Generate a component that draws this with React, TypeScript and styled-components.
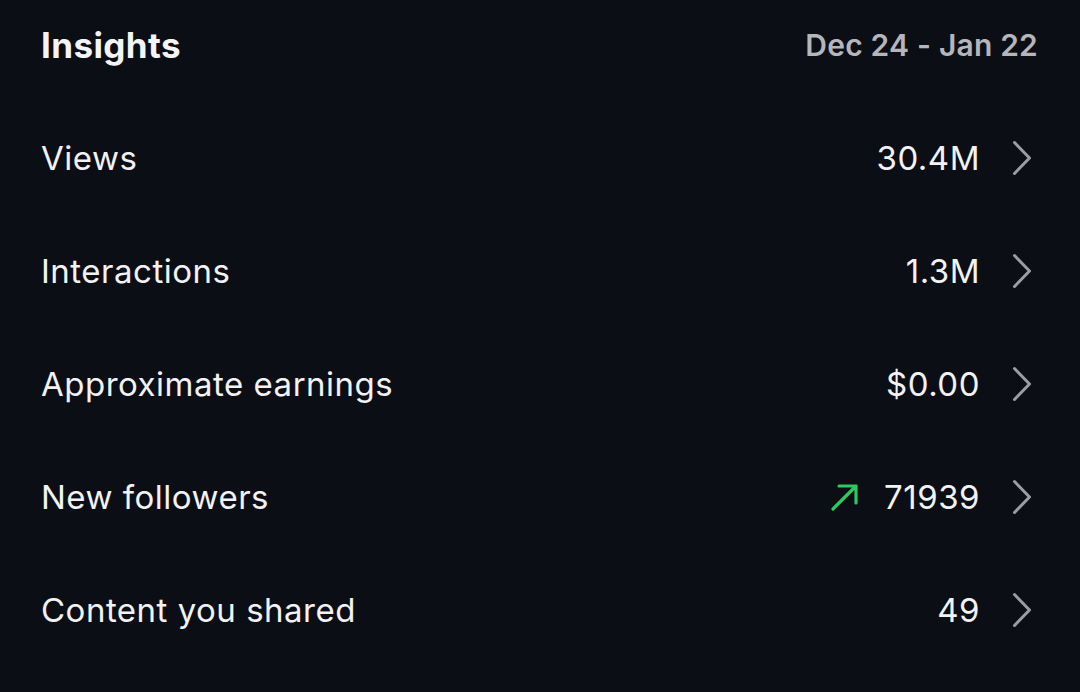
import React from "react";
import styled, { createGlobalStyle } from "styled-components";

const GlobalStyle = createGlobalStyle`
  html, body {
    margin: 0;
    padding: 0;
    background: #0b0e15;
  }
  body {
    font-family: Inter, "Noto Sans", sans-serif;
    -webkit-font-smoothing: antialiased;
  }
`;

type Row = {
  label: string;
  value: string;
  trendUp?: boolean;
};

const rows: Row[] = [
  { label: "Views", value: "30.4M" },
  { label: "Interactions", value: "1.3M" },
  { label: "Approximate earnings", value: "$0.00" },
  { label: "New followers", value: "71939", trendUp: true },
  { label: "Content you shared", value: "49" },
];

function ChevronIcon() {
  return (
    <svg width="20" height="36" viewBox="0 0 20 36" fill="none">
      <path
        d="M2.5 2.5 L17.5 18 L2.5 33.5"
        stroke="#9b9da4"
        strokeWidth="3"
        strokeLinecap="round"
        strokeLinejoin="round"
      />
    </svg>
  );
}

function TrendUpIcon() {
  return (
    <svg width="30" height="30" viewBox="0 0 30 30" fill="none">
      <path
        d="M3 27 L26 4 M9 4 H26 V21"
        stroke="#2ec95c"
        strokeWidth="3.2"
        strokeLinecap="round"
        strokeLinejoin="round"
      />
    </svg>
  );
}

export default function App() {
  return (
    <>
      <GlobalStyle />
      <Page>
        <Header>
          <Title>Insights</Title>
          <DateRange>Dec 24 - Jan 22</DateRange>
        </Header>
        <List>
          {rows.map((row) => (
            <Item key={row.label}>
              <Label>{row.label}</Label>
              <ValueGroup>
                {row.trendUp && (
                  <TrendWrap>
                    <TrendUpIcon />
                  </TrendWrap>
                )}
                <Value>{row.value}</Value>
                <ChevronWrap>
                  <ChevronIcon />
                </ChevronWrap>
              </ValueGroup>
            </Item>
          ))}
        </List>
      </Page>
    </>
  );
}

const Page = styled.div`
  width: 1080px;
  height: 692px;
  background: #0b0e15;
  padding: 0 48px 0 41px;
  box-sizing: border-box;
  overflow: hidden;
`;

const Header = styled.div`
  display: flex;
  justify-content: space-between;
  align-items: center;
  height: 90px;
  margin-right: -6px;
`;

const Title = styled.div`
  font-size: 35px;
  font-weight: 700;
  color: #f4f4f6;
  letter-spacing: 0.4px;
`;

const DateRange = styled.div`
  font-size: 30px;
  font-weight: 600;
  color: #b4b6bc;
  letter-spacing: 0.2px;
`;

const List = styled.div`
  display: flex;
  flex-direction: column;
  padding-top: 11px;
`;

const Item = styled.div`
  display: flex;
  justify-content: space-between;
  align-items: center;
  height: 113px;
`;

const Label = styled.div`
  font-size: 33px;
  font-weight: 400;
  color: #f2f2f4;
  letter-spacing: 0.5px;
`;

const ValueGroup = styled.div`
  display: flex;
  align-items: center;
`;

const TrendWrap = styled.div`
  display: flex;
  margin-right: 24px;
`;

const Value = styled.div`
  font-size: 33px;
  font-weight: 400;
  color: #f2f2f4;
  letter-spacing: 0.5px;
`;

const ChevronWrap = styled.div`
  display: flex;
  margin-left: 32px;
`;
